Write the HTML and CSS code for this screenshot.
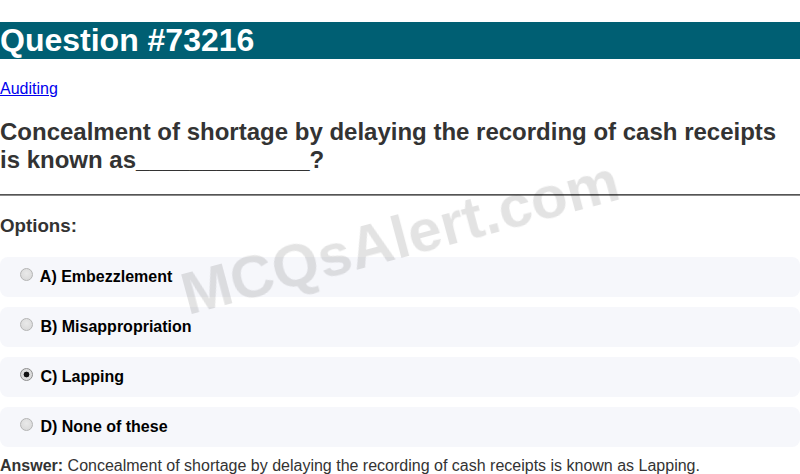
FILE: index.html
```html
<!DOCTYPE html>
<html>
<head>
<meta charset="utf-8">
<title>Question #73216</title>
<link rel="stylesheet" href="styles.css">
</head>
<body>
<h1 class="title">Question #73216</h1>
<p class="category"><a href="#">Auditing</a></p>
<h2 class="question">Concealment of shortage by delaying the recording of cash receipts is known as_____________?</h2>
<hr class="divider">
<h3 class="options-title">Options:</h3>
<div class="options">
  <label class="option"><input type="radio" name="q" disabled> A) Embezzlement</label>
  <label class="option"><input type="radio" name="q" disabled> B) Misappropriation</label>
  <label class="option"><input type="radio" name="q" disabled checked> C) Lapping</label>
  <label class="option"><input type="radio" name="q" disabled> D) None of these</label>
</div>
<p class="answer"><strong>Answer:</strong> Concealment of shortage by delaying the recording of cash receipts is known as Lapping.</p>
<div class="watermark">MCQsAlert.com</div>
</body>
</html>
```
FILE: styles.css
```css
html, body {
  margin: 0;
  padding: 0;
  background: #fff;
  font-family: "Liberation Sans", Arial, sans-serif;
  color: #333;
}
.title {
  margin: 22px 0 21.44px;
  font-size: 32px;
  font-weight: bold;
  background: #005f73;
  color: #fff;
  line-height: normal;
}
.category {
  margin: 16px 0;
  font-size: 16px;
}
.category a {
  color: #0000ee;
}
.question {
  margin: 20px 0;
  font-size: 24px;
  line-height: 28px;
  font-weight: bold;
  color: #333;
}
.divider {
  margin: 0;
  height: 0;
  border: 0;
  border-top: 1px solid #555;
  border-bottom: 1px solid #8a8a8a;
}
.options-title {
  margin: 18.7px 0 19.7px;
  font-size: 18.72px;
  font-weight: bold;
  color: #333;
}
.options {
  display: flex;
  flex-direction: column;
  gap: 10px;
}
.option {
  display: block;
  height: 40px;
  box-sizing: border-box;
  padding: 10px 15px;
  background: #f6f7fb;
  border-radius: 8px;
  font-size: 16px;
  line-height: 20px;
  font-weight: bold;
  color: #000;
}
.option input {
  appearance: none;
  -webkit-appearance: none;
  box-sizing: border-box;
  width: 13px;
  height: 13px;
  margin: 1px 3px 0 5px;
  vertical-align: top;
  border-radius: 50%;
  border: 1px solid #b4b4b4;
  background: radial-gradient(circle at 50% 40%, #e9e9e9, #d6d6d6);
}
.option input:checked {
  border-color: #8e8e8e;
  background: radial-gradient(circle, #111 0 2.6px, #dcdcdc 3.2px);
}
.answer {
  margin: 10px 0 0;
  font-size: 16px;
  color: #333;
}
.watermark {
  position: fixed;
  left: 50%;
  top: 50%;
  transform: translate(-50%, -50%) rotate(-15deg);
  font-size: 60px;
  font-weight: bold;
  color: rgba(0, 0, 0, 0.11);
  white-space: nowrap;
  pointer-events: none;
}
```
